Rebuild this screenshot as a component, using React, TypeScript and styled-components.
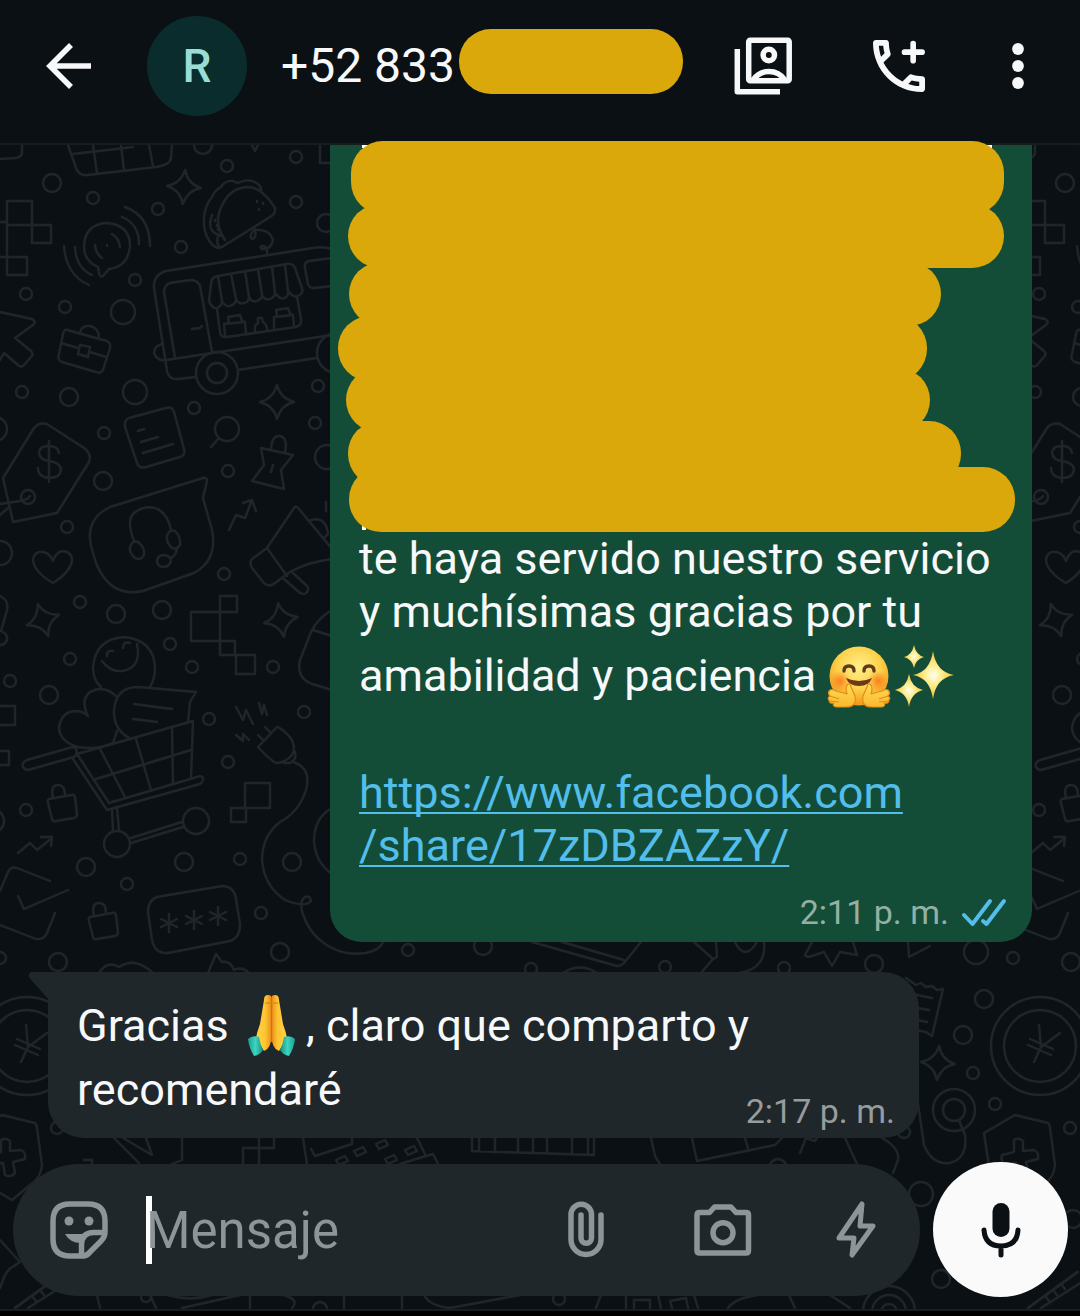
import React from 'react';
import styled, { createGlobalStyle } from 'styled-components';

const color = {
  bg: '#0b1014',
  doodle: '#20252a',
  surface: '#1f272a',
  sent: '#144d37',
  text: '#f7f8fa',
  muted: '#8d9598',
  link: '#53bdeb',
  marker: '#dba80b',
};

const GlobalStyle = createGlobalStyle`
  *, *::before, *::after { box-sizing: border-box; }
  body {
    margin: 0;
    background: ${color.bg};
    font-family: Roboto, "Noto Sans", sans-serif;
    color: ${color.text};
  }
`;

const Screen = styled.div`
  display: flex;
  flex-direction: column;
  min-height: 100vh;
  overflow: hidden;
`;

const Header = styled.header`
  display: flex;
  align-items: center;
  padding: 16px 50px 27px 44px;
  background: ${color.bg};
  border-bottom: 2px solid #171c1f;
`;

const IconButton = styled.button<{ $w?: number }>`
  display: flex;
  align-items: center;
  justify-content: center;
  flex: none;
  width: ${(p) => (p.$w ? `${p.$w}px` : 'auto')};
  padding: 0;
  border: 0;
  background: none;
  color: inherit;
  svg { display: block; }
`;

const Avatar = styled.div`
  display: grid;
  place-items: center;
  flex: none;
  width: 100px;
  height: 100px;
  margin: 0 34px 0 55px;
  border-radius: 50%;
  background: #0a2c2d;
  color: #99dcd3;
  font-size: 46px;
  font-weight: 500;
`;

const Contact = styled.h1`
  display: flex;
  align-items: center;
  flex: 1;
  margin: 0;
  font-size: 48px;
  line-height: 56px;
  font-weight: 400;
  white-space: nowrap;
`;

const NameMark = styled.span`
  width: 224px;
  height: 65px;
  margin: 0 0 9px 4px;
  border-radius: 32px;
  background: ${color.marker};
`;

const Actions = styled.div`
  display: flex;
  align-items: center;
  gap: 81px;
`;

const Chat = styled.main`
  position: relative;
  flex: 1;
  display: flex;
  flex-direction: column;
`;

const Wallpaper = styled.svg`
  position: absolute;
  inset: 0;
  width: 100%;
  height: 100%;
`;

const Messages = styled.section`
  position: relative;
  display: flex;
  flex-direction: column;
  gap: 30px;
`;

const Bubble = styled.article<{ $sent?: boolean }>`
  position: relative;
  width: ${(p) => (p.$sent ? '65%' : 'auto')};
  margin: ${(p) => (p.$sent ? '0 48px 0 auto' : '0 161px 0 48px')};
  padding: ${(p) => (p.$sent ? '0 25px 9px 29px' : '16px 24px 6px 29px')};
  border-radius: ${(p) => (p.$sent ? '0 0 32px 32px' : '0 36px 36px 36px')};
  background: ${(p) => (p.$sent ? color.sent : color.surface)};
`;

const Tail = styled.svg`
  position: absolute;
  top: 0;
  left: -20px;
`;

const Body = styled.p`
  margin: 0;
  font-size: 45px;
  line-height: 53px;
`;

const Link = styled.a`
  color: ${color.link};
  text-decoration: underline;
  text-decoration-thickness: 2px;
  text-underline-offset: 4px;
  text-decoration-skip-ink: none;
`;

const Emoji = styled.svg`
  width: 66px;
  height: 75px;
  vertical-align: -22px;
`;

const Meta = styled.footer<{ $overlap?: boolean }>`
  display: flex;
  align-items: center;
  justify-content: flex-end;
  gap: 12px;
  margin-top: ${(p) => (p.$overlap ? '-25px' : '20px')};
  font-size: 34px;
  line-height: 41px;
  color: ${(p) => (p.$overlap ? '#979c9e' : '#94b0a4')};
`;

const Hidden = styled.div`
  position: relative;
  height: 387px;
  margin: 0 -25px 0 -29px;
`;

const Mark = styled.span<{ $x: number; $y: number; $w: number; $h: number }>`
  position: absolute;
  left: ${(p) => p.$x}px;
  top: ${(p) => p.$y}px;
  width: ${(p) => p.$w}px;
  height: ${(p) => p.$h}px;
  border-radius: 32px;
  background: ${color.marker};
`;

const Sliver = styled(Mark)`
  border-radius: 0;
  background: #fff;
`;

const Composer = styled.form`
  position: relative;
  display: flex;
  align-items: center;
  gap: 13px;
  margin-top: auto;
  padding: 24px 12px 12px 13px;
`;

const Field = styled.div`
  display: flex;
  align-items: center;
  flex: 1;
  min-width: 0;
  height: 132px;
  padding: 0 44px 0 37px;
  border-radius: 66px;
  background: ${color.surface};
  color: ${color.muted};
`;

const Caret = styled.span`
  flex: none;
  width: 6px;
  height: 68px;
  margin: 0 -6px 0 38px;
  background: #fff;
`;

const Input = styled.input`
  position: relative;
  flex: 1;
  min-width: 0;
  height: 70px;
  padding: 2px 0 0;
  border: 0;
  outline: 0;
  background: none;
  color: ${color.text};
  caret-color: transparent;
  font: 400 51px Roboto, "Noto Sans", sans-serif;
  &::placeholder { color: ${color.muted}; opacity: 1; }
`;

const Tools = styled.div`
  display: flex;
  align-items: center;
  gap: 84px;
`;

const MicButton = styled(IconButton)`
  width: 135px;
  height: 135px;
  border-radius: 50%;
  background: #fafafa;
  color: ${color.bg};
`;

const NavBar = styled.div`
  height: 8px;
  border-top: 2px solid #1a1d20;
  background: #000;
`;

const marks = [
  { x: 21, y: -4, w: 653, h: 73 },
  { x: 18, y: 59, w: 656, h: 64 },
  { x: 19, y: 117, w: 592, h: 64 },
  { x: 8, y: 171, w: 589, h: 65 },
  { x: 16, y: 223, w: 584, h: 64 },
  { x: 18, y: 276, w: 613, h: 65 },
  { x: 19, y: 322, w: 666, h: 65 },
];

const dots: [number, number, number][] = [
  [52, 183, 9], [93, 198, 6], [158, 209, 6], [181, 247, 6], [135, 280, 6], [123, 312, 12], [26, 294, 6], [65, 307, 6],
  [22, 392, 6], [69, 397, 9], [135, 392, 12], [194, 408, 6], [203, 145, 9], [227, 166, 6], [296, 157, 6], [296, 202, 6],
  [326, 223, 9], [318, 386, 6], [227, 429, 12], [315, 423, 6], [104, 433, 6], [-5, 429, 12], [103, 481, 9], [67, 527, 6],
  [228, 471, 6], [327, 457, 12], [0, 553, 12], [224, 574, 6], [80, 602, 6], [116, 614, 9], [162, 610, 9], [170, 644, 6],
  [70, 659, 6], [192, 667, 6], [273, 667, 6], [10, 681, 6], [49, 695, 9], [26, 810, 6], [86, 867, 9], [127, 884, 6],
  [184, 862, 9], [240, 859, 6], [292, 862, 9], [209, 719, 6], [228, 762, 6], [304, 712, 6], [261, 913, 6], [280, 952, 9],
  [58, 962, 9], [0, 958, 6], [-8, 821, 12], [217, 373, 21], [217, 373, 10], [337, 353, 20], [28, 497, 7], [117, 844, 13],
  [196, 821, 13], [874, 964, 9], [976, 952, 12], [784, 968, 6], [665, 967, 6], [408, 950, 6], [483, 946, 9], [531, 969, 6],
  [27, 1046, 49], [27, 1046, 36], [57, 1128, 6],
  [984, 999, 9], [963, 1035, 9], [973, 1073, 6], [995, 1104, 6], [904, 1132, 6], [954, 1110, 21], [954, 1110, 11],
  [921, 1194, 12], [941, 1279, 9], [60, 1219, 9], [889, 1312, 26], [889, 1312, 17], [889, 1312, 8], [559, 1299, 6], [146, 1297, 5], [320, 1309, 7],
];

const stars: [number, number, number][] = [
  [184, 187, 4], [277, 402, 0], [43, 620, -18], [281, 620, -10], [938, 1063, 4],
];

const lines = [
  // crates and the basket along the top edge
  'M0 159 L16 158 Q22 157 22 152 V144', 'M68 145 L76 168 Q79 176 88 175 L156 167 Q170 165 171 158 L172 145',
  'M73 154 L133 147 M93 145 L97 173 M121 145 L124 171 M149 145 L153 166', 'M320 145 V163 H332', 'M252 145 L255 151 L258 145',
  // pixel blocks
  'M7 201 H32 V225 H7 Z M32 225 H51 V243 H32 Z M7 257 H27 V275 H7 Z M7 225 V257 M0 222 H7 M0 257 H7',
  'M191 612 H220 V641 H191 Z M220 596 H237 V612 H220 Z M220 612 V655 H235 V641 H220 M236 655 H255 V674 H236 Z',
  'M245 783 H270 V808 H245 Z M231 808 H246 V822 H231 Z M0 706 H15 V725 H0 M0 751 H9 V765 H0',
  // broadcasting speech bubble
  'M98 267 Q84 261 84 246 Q85 224 107 223 Q130 225 130 246 Q128 267 109 269 L103 276 Q100 278 99 273 Z M107 245 v1',
  'M122 217 Q139 224 139 244 M125 207 Q150 216 150 246 M75 247 Q76 268 92 275 M64 246 Q66 275 89 285 M112 234 Q119 238 120 247 M95 245 Q96 254 102 258',
  // taco
  'M225 240 Q215 225 219 213 Q227 188 247 187 Q262 187 275 208 Q276 214 270 217 L222 247 Q216 250 210 242 Q203 232 204 218 Q205 205 212 197 Q215 190 221 187 Q225 180 233 181 Q238 184 240 182 Q250 178 258 184 Q261 186 261 190',
  'M212 215 Q206 232 220 235 M218 236 Q222 234 224 239 M218 236 Q216 245 220 247 M215 220 v1 M217 225 v1 M218 229 v1 M257 201 v1 M263 203 v1 M259 209 v1',
  'M255 229 Q248 236 252 239 Q257 238 255 230 Q270 229 273 240 Q271 250 262 249 Q258 246 264 246 Q268 248 267 254',
  // food truck
  'M196 377 L178 379 Q169 380 167 371 L154 288 Q153 275 166 271 L313 248 Q322 246 332 249 M166 360 L332 335 M238 370 L317 358 M162 344 Q154 346 154 353 Q157 361 165 360',
  'M175 358 L164 292 Q164 285 170 283 L190 280 Q198 280 200 286 L212 352 M192 329 L200 328 L202 326',
  'M218 276 Q211 277 211 284 L209 301 Q212 309 217 308 Q222 306 222 301 Q225 307 230 306 Q236 304 236 299 Q239 305 244 303 Q249 302 249 297 Q252 303 257 301 Q262 299 262 295 Q265 301 270 299 Q275 297 275 293 Q280 300 285 298 Q289 295 288 291 Q293 298 298 296 Q304 293 302 288 L295 268 Q293 263 287 264 Z',
  'M218 276 L222 301 M231 274 L236 299 M245 271 L249 297 M258 269 L262 295 M272 267 L275 293 M285 265 L288 291',
  'M217 309 L220 332 Q221 338 227 337 L296 327 Q302 325 301 319 L297 297',
  'M225 335 L224 324 L229 323 L228 317 L240 315 L242 321 L245 322 L246 334 M224 324 L245 322 M255 331 Q254 325 258 323 V318 H262 L263 322 Q267 325 267 329 M274 328 V317 L277 316 L276 310 L288 308 L290 314 L293 315 L294 326 M274 317 L293 315',
  'M332 258 L309 261 Q304 262 305 268 L308 284 Q309 288 314 288 L332 286',
  // cursor arrow and briefcase
  'M0 312 L32 319 Q37 322 33 325 L15 338 L31 351 Q34 354 31 357 L24 365 Q21 368 18 365 L4 353 L0 360',
  'M67 330 L107 341 Q111 343 110 348 L103 370 Q101 374 96 372 L62 362 Q57 360 59 354 L63 334 Q64 329 67 330 Z M61 343 L78 348 M90 352 L106 357 M80 345 L90 347 L88 357 L78 354 Z M80 333 Q81 325 90 326 Q99 328 99 338',
  // price tag
  'M3 478 L34 428 Q39 422 47 424 L84 448 Q92 454 89 462 L57 513 L13 522 Z M0 504 L20 501 Q27 500 30 496 M0 515 L8 508',
  'M49 441 V482 M59 453 Q58 446 49 446 Q39 446 39 453 Q40 460 49 461 Q61 463 61 470 Q60 478 49 478 Q38 477 38 468',
  // note, magnifier, pin
  'M129 418 L166 408 Q172 406 174 412 L184 449 Q186 455 180 457 L146 467 Q139 469 137 463 L125 427 Q124 420 129 418 Z M138 431 L144 429 M141 442 L158 437 M143 453 L173 444',
  'M219 438 L211 447', 'M261 448 L293 455 L281 470 L284 489 L252 481 L264 465 Z M271 449 Q272 435 280 436 Q288 438 285 452 M273 465 L271 472',
  // support bubble with headset
  'M110 507 L203 478 Q207 477 207 481 L203 498 L212 530 Q218 560 194 573 L143 591 Q110 598 96 563 L91 546 Q85 519 110 507 Z',
  'M134 541 Q126 520 134 513 Q145 504 158 509 Q168 515 171 530 M130 547 Q132 540 138 542 Q145 547 144 555 Q141 561 135 558 Q129 553 130 547 Z M167 536 Q169 529 175 531 Q181 537 180 545 Q177 550 172 548 Q166 543 167 536 Z M177 549 Q176 555 171 558 M157 561 Q158 555 164 555 Q171 556 171 561 Q169 567 163 567 Q157 566 157 561 Z',
  'M53 583 Q34 572 33 560 Q34 551 43 552 Q50 553 53 561 Q56 551 64 551 Q73 553 72 562 Q68 574 53 583 Z',
  'M229 530 L236 515 L245 518 L252 500 M243 503 L252 500 L256 511',
  // megaphone
  'M332 549 L299 509 Q296 505 294 508 L267 548 L252 559 Q249 563 252 568 L264 583 Q269 588 275 583 L290 572 Q308 562 332 559 M267 548 L287 576 M284 579 L300 593 Q306 596 308 590 Q309 588 306 585 L293 573 M311 520 Q326 516 328 534 L325 537 M326 502 V511',
  'M0 596 Q9 600 7 610 L1 631 Q8 634 7 640 Q5 645 0 645',
  // smiley and cart
  'M101 687 Q93 680 93 668 Q95 639 124 637 Q154 640 155 668 Q155 679 150 687 M102 661 Q110 672 122 671 Q142 668 137 644 M107 656 Q106 650 113 651 M123 648 Q123 641 130 643',
  'M332 610 Q317 619 311 632 L300 660 Q296 678 312 684 L332 690 M313 630 L332 636',
  'M78 747 Q60 742 59 728 Q61 712 75 711 Q83 711 88 716 Q80 700 90 692 Q104 684 117 697 M78 747 Q98 750 113 743 L117 731',
  'M131 739 Q113 730 114 710 Q116 687 138 687 L196 692 L190 702 L188 722 M134 704 L172 709 M133 719 L157 722',
  'M28 770 L74 757 Q78 754 76 749 Q73 746 69 748 L27 760 Q21 763 23 767 Q25 770 28 770 Z M77 754 L193 721 L191 778 M77 754 L109 803 L197 777 Q201 775 203 778 Q204 781 200 784 L107 810 L73 759',
  'M96 779 L191 750 M100 749 L125 797 M136 739 L151 790 M172 728 L173 784 M112 809 L113 831 M117 808 L119 831 M131 838 L182 822 M131 843 L183 827',
  'M49 799 L71 795 Q74 794 75 797 L77 814 Q77 817 74 818 L56 821 Q53 822 52 819 L48 803 Q47 800 49 799 Z M53 798 Q50 785 58 785 Q65 785 65 795',
  'M90 917 L112 913 Q115 912 116 915 L118 932 Q118 935 115 936 L97 939 Q94 940 93 937 L89 921 Q88 918 90 917 Z M94 916 Q91 903 99 903 Q106 903 106 913',
  'M18 853 L30 843 L37 850 L52 838 M41 837 L52 837 L51 846',
  // plug with its cable
  'M236 707 L243 720 L246 710 L253 724 M259 703 L262 714 L264 705 L267 715 M236 735 L243 741 V734 L249 740 M277 727 Q280 727 290 737 Q297 747 292 755 Q285 763 276 763 Q270 760 258 747 Z M265 727 L270 732 M258 735 L263 740 M295 752 Q297 760 290 763 L284 763',
  'M293 762 Q312 768 306 790 Q299 812 280 822 Q262 836 262 860 Q264 886 285 900 Q305 908 311 901 Q310 895 305 897 Q298 902 304 917 Q312 938 332 948 Q348 956 366 953 Q380 950 383 942',
  'M332 808 Q314 818 314 841 Q315 862 332 874',
  'M0 891 L8 872 Q11 866 17 868 L50 881 M18 896 L24 909 L68 890 M0 925 L36 939 Q44 940 47 933 L55 913',
  // passcode box
  'M157 897 L222 886 Q234 886 236 899 L240 924 Q240 938 230 941 L168 953 Q155 954 152 940 L148 912 Q148 900 157 897 Z',
  'M169 914 V932 M161 919 L177 927 M161 927 L177 919 M194 911 V929 M186 916 L202 924 M186 924 L202 916 M218 907 V925 M210 912 L226 920 M210 920 L226 912',
  'M99 973 Q107 960 119 967 Q135 956 153 973 M208 973 L216 954 L222 962 Q230 960 234 970 Q242 966 249 973',
  // strip between the two messages
  'M532 942 L617 966 Q621 966 624 963 L641 942 M562 942 L624 960 M563 973 Q580 962 597 973 M694 942 L713 959 L701 973 M716 942 L717 957 L713 959 M735 942 Q745 962 757 942 M764 942 Q767 968 740 973',
  'M812 942 L805 955 Q806 958 812 956 L824 952 L832 966 L840 952 L857 955 L853 942 M908 942 L909 957 L930 946',
  // coin, shield, receipt, stethoscope
  'M26 1025 L28 1047 L21 1062 M47 1033 L28 1047 M15 1045 L38 1055 M17 1039 L40 1049',
  'M984 1133 L1015 1115 L1048 1123 Q1050 1125 1050 1128 L1055 1165 Q1054 1175 1048 1181 L1025 1200 L1000 1185 Q990 1178 988 1160 Z',
  'M1014 1140 Q1019 1137 1023 1141 V1151 L1034 1150 Q1039 1152 1038 1159 L1026 1162 L1028 1173 Q1024 1178 1018 1175 L1016 1163 L1005 1164 Q1000 1161 1002 1155 L1014 1152 Z',
  'M906 978 L916 985 L921 983 L926 987 L932 986 L937 990 L943 989 L932 1036 L926 1032 L916 1030 M912 994 L932 998 M912 1007 L929 1010 M912 1019 L927 1022',
  'M916 1090 L924 1145 Q932 1165 950 1163 Q968 1158 965 1135 L959 1120',
  // strip above the composer
  'M114 1138 L139 1163 M123 1138 L152 1155 L146 1138 M182 1138 V1160 L172 1164 M84 1160 H92 V1168 M243 1164 V1148 H274 V1138 M259 1138 V1164',
  'M303 1138 L307 1164 M417 1138 L426 1156 L433 1154 L438 1164 M311 1149 L315 1156 L352 1144 V1138 M354 1151 l9 -4 l3 5 l-9 4 z M376 1144 l9 -4 l3 5 l-9 4 z M405 1150 l9 -4 l3 5 l-9 4 z M385 1159 l9 -4 l3 5 l-9 4 z M336 1160 l9 -4 l3 5 l-9 4 z M400 1164 L426 1156',
  'M472 1138 V1151 L594 1155 V1138 M479 1138 V1151 M495 1138 V1152 M518 1138 V1152 M533 1138 V1153 M547 1138 V1153 M572 1138 V1154 M588 1138 V1154',
  'M651 1138 L655 1156 L660 1164 M692 1138 L697 1161 L775 1145 L782 1138 M745 1138 L748 1148 M770 1164 Q778 1154 786 1164 M800 1153 L806 1138 L815 1141 L817 1138 M845 1138 L857 1164 M882 1138 Q900 1148 898 1160 L893 1173',
  // bottom edge
  'M0 1240 L20 1262 L14 1266 Q6 1270 3 1280 L0 1288 M15 1308 L64 1272 M28 1308 L72 1280 M32 1296 l4 5 M40 1290 l4 5 M48 1284 l4 5 M1078 1272 L1028 1308',
  'M97 1295 L100 1308 M150 1295 L156 1308 M168 1295 Q190 1302 212 1295 M182 1308 L240 1295 M250 1295 V1308 M284 1295 Q300 1300 292 1308 M344 1295 V1308 M402 1295 V1308 M424 1295 Q430 1306 450 1308 M450 1308 L520 1295 M596 1308 L601 1295 M626 1295 V1308 M634 1308 V1300 H650 V1308 M658 1295 L661 1308 M672 1308 L670 1301 L686 1298 L688 1308 M694 1295 L698 1308 M728 1308 Q735 1298 758 1295 M789 1295 L795 1308 M830 1295 L850 1308',
];

const TILE = 1013;

function Doodles() {
  return (
    <Wallpaper aria-hidden="true" fill="none" stroke={color.doodle} strokeWidth="2.4" strokeLinecap="round" strokeLinejoin="round">
      <defs>
        <g id="doodle-set">
          {lines.map((d) => <path key={d} d={d} />)}
          {dots.map(([x, y, r]) => <circle key={`${x}-${y}-${r}`} cx={x} cy={y} r={r} />)}
          {stars.map(([x, y, a]) => (
            <path key={`${x}-${y}`} transform={`translate(${x} ${y}) rotate(${a})`} d="M0 -17 Q3 -4 17 0 Q4 3 0 17 Q-3 4 -17 0 Q-4 -3 0 -17 Z" />
          ))}
        </g>
        <pattern id="doodle-tile" width={TILE} height="1200" patternUnits="userSpaceOnUse">
          <g transform="translate(0 -145)">
            <use href="#doodle-set" x={-TILE} />
            <use href="#doodle-set" />
            <use href="#doodle-set" x={TILE} />
          </g>
        </pattern>
      </defs>
      <rect width="100%" height="100%" fill="url(#doodle-tile)" stroke="none" />
    </Wallpaper>
  );
}

const stroke = { fill: 'none', stroke: 'currentColor', strokeLinecap: 'round', strokeLinejoin: 'round' } as const;

function HugEmoji() {
  return (
    <Emoji viewBox="1 0 66 75" role="img" aria-label="🤗">
      <defs>
        <radialGradient id="hug-face" cx="50%" cy="35%" r="62%">
          <stop offset="0" stopColor="#fff08a" />
          <stop offset="0.6" stopColor="#fdd04a" />
          <stop offset="1" stopColor="#f29a1c" />
        </radialGradient>
        <radialGradient id="hug-cheek">
          <stop offset="0" stopColor="#f9791a" stopOpacity="0.9" />
          <stop offset="1" stopColor="#f9791a" stopOpacity="0" />
        </radialGradient>
        <linearGradient id="hug-hand" x1="0" y1="0" x2="0" y2="1">
          <stop offset="0" stopColor="#ffdc5a" />
          <stop offset="1" stopColor="#f9b92c" />
        </linearGradient>
      </defs>
      <circle cx="33" cy="38" r="29.5" fill="url(#hug-face)" />
      <circle cx="14" cy="43" r="10" fill="url(#hug-cheek)" />
      <circle cx="52" cy="43" r="10" fill="url(#hug-cheek)" />
      <path d="M18 33 Q18 28 23 28 Q28 28 28 33 M38 33 Q38 28 43 28 Q48 28 48 33" fill="none" stroke="#5f3a20" strokeWidth="3.4" strokeLinecap="round" />
      <path d="M20 40 Q33 46 46 40 Q43 48 33 48 Q23 48 20 40 Z" fill="#6b3a17" />
      <g id="hug-left" fill="url(#hug-hand)" stroke="#e58b17" strokeWidth="1.2" strokeLinejoin="round">
        <path d="M21 47 Q24 44 25 49 L29 58 Q31 69 20 69 L10 69 Q6 68 8 65 Q3 66 3 62 Q1 60 4 58 Q1 55 4 52 Q7 51 10 53 L21 56 Q19 51 21 47 Z" />
        <path d="M4 58 L13 61 M4 63 L13 64" fill="none" />
      </g>
      <use href="#hug-left" transform="translate(66 0) scale(-1 1)" />
    </Emoji>
  );
}

function SparklesEmoji() {
  return (
    <Emoji viewBox="1 0 66 75" role="img" aria-label="✨">
      <defs>
        <radialGradient id="spark">
          <stop offset="0" stopColor="#fffdf0" />
          <stop offset="0.35" stopColor="#fff09c" />
          <stop offset="1" stopColor="#f9c22c" />
        </radialGradient>
      </defs>
      <g fill="url(#spark)">
        <path d="M41 13 Q44 34 62 37 Q44 40 41 61 Q38 40 21 37 Q38 34 41 13 Z" />
        <path d="M22 7 Q24 17 32 19 Q24 21 22 30 Q20 21 12 19 Q20 17 22 7 Z" />
        <path d="M17 36 Q19 49 31 52 Q19 55 17 69 Q15 55 3 52 Q15 49 17 36 Z" />
      </g>
    </Emoji>
  );
}

function PrayEmoji() {
  return (
    <Emoji viewBox="2 0 66 75" role="img" aria-label="🙏">
      <defs>
        <linearGradient id="pray-skin" x1="0" y1="0" x2="1" y2="0">
          <stop offset="0" stopColor="#ffd24a" />
          <stop offset="0.6" stopColor="#fdc62f" />
          <stop offset="1" stopColor="#ef8c1a" />
        </linearGradient>
        <linearGradient id="pray-cuff" x1="0" y1="0" x2="1" y2="0">
          <stop offset="0" stopColor="#16a193" />
          <stop offset="0.5" stopColor="#3fd4bd" />
          <stop offset="1" stopColor="#0f8f84" />
        </linearGradient>
      </defs>
      <g id="pray-half">
        <path d="M33.5 9 Q33 7 30 7 Q26 7 26 12 L22 36 Q19 44 18 50 L26 63 Q33 61 33.5 48 Z" fill="url(#pray-skin)" />
        <path d="M27 15 H32" stroke="#d87a14" strokeWidth="1" fill="none" />
        <path d="M10 51 Q14 47 21 49 Q22 56 25 62 Q22 67 16 68 Q11 60 10 51 Z" fill="url(#pray-cuff)" />
      </g>
      <use href="#pray-half" transform="translate(67 0) scale(-1 1)" />
      <path d="M33.5 9 V54" stroke="#c9741a" strokeWidth="1.4" />
    </Emoji>
  );
}

export default function App() {
  return (
    <>
      <GlobalStyle />
      <Screen>
        <Header>
          <IconButton aria-label="Atrás">
            <svg width="48" height="48" viewBox="0 0 48 48" fill="none" stroke="currentColor" strokeWidth="5.6">
              <path d="M47 24 H6 M27 3 L6 24 L27 45" />
            </svg>
          </IconButton>
          <Avatar>R</Avatar>
          <Contact>+52 833<NameMark /></Contact>
          <Actions>
            <IconButton aria-label="Contacto">
              <svg width="58" height="58" viewBox="0 0 58 58" fill="none" stroke="currentColor" strokeWidth="5.5" strokeLinejoin="round">
                <rect x="14.7" y="3.2" width="40.5" height="40.5" rx="1.5" />
                <path d="M3.3 12 V54.8 H46" />
                <circle cx="34.8" cy="18" r="5.7" />
                <path d="M19 43 Q25 34.5 35 34.5 Q45 34.5 51 43" />
              </svg>
            </IconButton>
            <IconButton aria-label="Llamar">
              <svg width="52" height="52" viewBox="3 3 18 18" fill="currentColor">
                <path d="M6.54 5c.06.89.21 1.76.45 2.59l-1.2 1.2c-.41-1.2-.67-2.47-.76-3.79h1.51m9.86 12.02c.85.24 1.72.39 2.6.45v1.49c-1.32-.09-2.59-.35-3.8-.75l1.2-1.19M7.5 3H4c-.55 0-1 .45-1 1 0 9.39 7.61 17 17 17 .55 0 1-.45 1-1v-3.49c0-.55-.45-1-1-1-1.24 0-2.45-.2-3.57-.57-.1-.04-.21-.05-.31-.05-.26 0-.51.1-.71.29l-2.2 2.2c-2.83-1.45-5.15-3.76-6.59-6.59l2.2-2.2c.28-.28.36-.67.25-1.02C8.7 6.45 8.5 5.25 8.5 4c0-.55-.45-1-1-1z" />
                <path d="M16.9 4.2 V10.2 M13.9 7.2 H20" fill="none" stroke="currentColor" strokeWidth="1.95" strokeLinecap="round" />
              </svg>
            </IconButton>
            <IconButton aria-label="Más opciones">
              <svg width="24" height="52" viewBox="0 0 24 52" fill="currentColor">
                <circle cx="12" cy="9" r="5.9" />
                <circle cx="12" cy="26" r="5.9" />
                <circle cx="12" cy="43" r="5.9" />
              </svg>
            </IconButton>
          </Actions>
        </Header>

        <Chat>
          <Doodles />
          <Messages>
            <Bubble $sent>
              <Hidden>
                <Sliver $x={32} $y={0} $w={8} $h={3} />
                <Sliver $x={654} $y={0} $w={8} $h={3} />
                <Sliver $x={32} $y={376} $w={4} $h={9} />
                {marks.map((m) => <Mark key={m.y} $x={m.x} $y={m.y} $w={m.w} $h={m.h} />)}
              </Hidden>
              <Body>
                te haya servido nuestro servicio y muchísimas gracias por tu amabilidad y paciencia <HugEmoji /><SparklesEmoji />
                <br />
                <br />
                <Link href="https://www.facebook.com/share/17zDBZAZzY/">https://www.facebook.com<wbr />/share/17zDBZAZzY/</Link>
              </Body>
              <Meta>
                <time>2:11 p. m.</time>
                <svg width="46" height="30" viewBox="0 0 46 30" role="img" aria-label="Leído" color={color.link} {...stroke} strokeWidth="4">
                  <path d="M3 17 L11.5 26 L29 3 M22 23 L25.5 26 L43 3" />
                </svg>
              </Meta>
            </Bubble>

            <Bubble>
              <Tail width="21" height="28" viewBox="0 0 21 28" fill={color.surface} aria-hidden="true">
                <path d="M4 0 H21 V28 L1.5 6 Q-1 1 4 0 Z" />
              </Tail>
              <Body>
                Gracias <PrayEmoji /><span>, claro que comparto y</span> <span>recomendaré</span>
              </Body>
              <Meta $overlap><time>2:17 p. m.</time></Meta>
            </Bubble>
          </Messages>

          <Composer>
            <Field>
              <IconButton type="button" aria-label="Stickers">
                <svg width="58" height="58" viewBox="0 0 58 58" {...stroke} strokeWidth="5.5">
                  <path d="M33 55 H20 Q3 55 3 38 V20 Q3 3 20 3 H38 Q55 3 55 20 V31 Q55 36 51 40 L40 51 Q37 55 33 55 Z" />
                  <path d="M54 31.5 H44 Q31.5 31.5 31.5 44 V54" />
                  <path d="M15 33 H38 L31 42 Q20 42 15 33 Z" fill="currentColor" stroke="none" />
                  <circle cx="19" cy="20" r="4.5" fill="currentColor" stroke="none" />
                  <circle cx="39" cy="20" r="4.5" fill="currentColor" stroke="none" />
                </svg>
              </IconButton>
              <Caret />
              <Input placeholder="Mensaje" aria-label="Mensaje" />
              <Tools>
                <IconButton type="button" aria-label="Adjuntar" $w={48}>
                  <svg width="36" height="57" viewBox="0 0 36 57" {...stroke} strokeWidth="5.5">
                    <path d="M33 14 V38.5 a15 15 0 0 1 -30 0 V13.5 a10.25 10.25 0 0 1 20.5 0 V37 a5.25 5.25 0 0 1 -10.5 0 V14" />
                  </svg>
                </IconButton>
                <IconButton type="button" aria-label="Cámara" $w={58}>
                  <svg width="58" height="52" viewBox="0 0 58 52" {...stroke} strokeWidth="5.5">
                    <path d="M3 11 Q3 8.5 5.5 8.5 H15.5 L20.5 3 H37 L42 8.5 H52 Q54.5 8.5 54.5 11 V46.5 Q54.5 49 52 49 H5.5 Q3 49 3 46.5 Z" />
                    <circle cx="29" cy="28.7" r="10" />
                  </svg>
                </IconButton>
                <IconButton type="button" aria-label="Respuestas rápidas" $w={40}>
                  <svg width="40" height="57" viewBox="0 0 40 57" {...stroke} strokeWidth="5">
                    <path d="M26 3 L24 25 H37 L16 54 L18 37 H3 Z" />
                  </svg>
                </IconButton>
              </Tools>
            </Field>
            <MicButton type="button" aria-label="Mensaje de voz">
              <svg width="40" height="56" viewBox="0 0 40 56" {...stroke} strokeWidth="5">
                <rect x="11.5" y="1" width="17" height="34" rx="8.5" fill="currentColor" stroke="none" />
                <path d="M3 28 Q4 44 20 44 Q36 44 37 28 M20 44 V53" />
              </svg>
            </MicButton>
          </Composer>
        </Chat>
        <NavBar />
      </Screen>
    </>
  );
}
